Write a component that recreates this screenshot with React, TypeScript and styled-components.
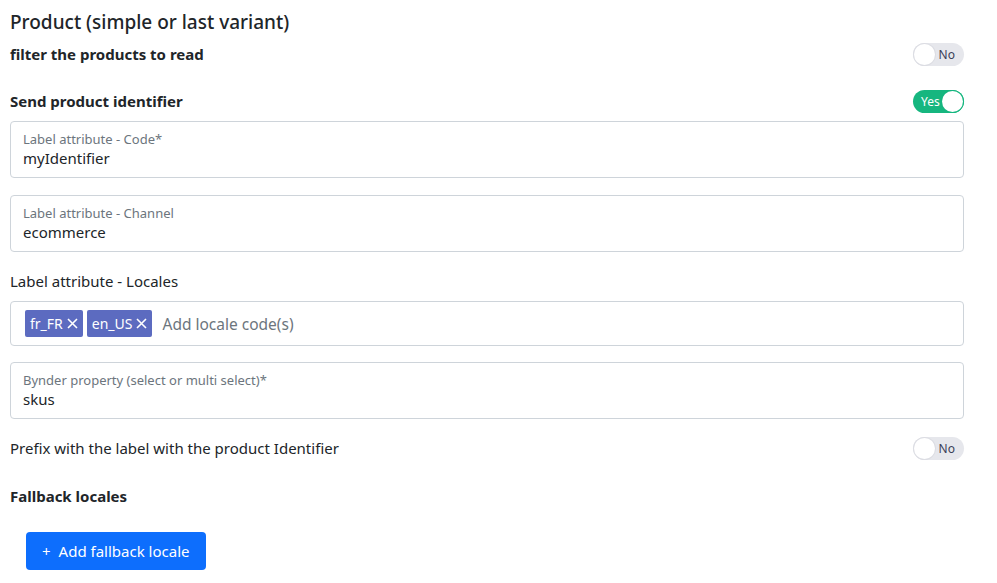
import { createGlobalStyle } from "styled-components";
import styled from "styled-components";

const GlobalStyle = createGlobalStyle`
  body {
    margin: 0;
    background: #ffffff;
    font-family: "Noto Sans", "Open Sans", sans-serif;
    color: #212529;
  }
`;

const Page = styled.div`
  width: 954px;
  padding: 8px 0 0 10px;
`;

const Title = styled.h2`
  margin: 0 0 6px;
  font-size: 19px;
  font-weight: 500;
  line-height: 28px;
`;

const SwitchRow = styled.div<{ $bold?: boolean; $gap?: number }>`
  display: flex;
  align-items: center;
  justify-content: space-between;
  height: 24px;
  margin-bottom: ${(p) => p.$gap ?? 0}px;
  font-size: 15px;
  font-weight: ${(p) => (p.$bold ? 700 : 400)};
`;

const Toggle = styled.div<{ $on?: boolean }>`
  position: relative;
  width: 51px;
  height: 23px;
  border-radius: 12px;
  background: ${(p) => (p.$on ? "#16b67f" : "#e6e7ec")};
  color: ${(p) => (p.$on ? "#ffffff" : "#3b3f58")};
  font-size: 12px;
  font-weight: 400;
  display: flex;
  align-items: center;
  justify-content: ${(p) => (p.$on ? "flex-start" : "flex-end")};
  padding: ${(p) => (p.$on ? "0 0 0 8px" : "0 9px 0 0")};
  box-sizing: border-box;
  &::after {
    content: "";
    position: absolute;
    top: 1px;
    ${(p) => (p.$on ? "right: 1px;" : "left: 1px;")}
    width: 21px;
    height: 21px;
    border-radius: 50%;
    background: #ffffff;
    box-shadow: 0 0 0 1px ${(p) => (p.$on ? "#16b67f" : "#dcdde3")};
  }
`;

const Field = styled.div<{ $gap?: number }>`
  border: 1px solid #ced4da;
  border-radius: 4px;
  height: 57px;
  box-sizing: border-box;
  padding: 8px 12px 0;
  margin-bottom: ${(p) => p.$gap ?? 0}px;
`;

const FieldLabel = styled.div`
  font-size: 13px;
  color: #6c757d;
  line-height: 18px;
`;

const FieldValue = styled.div`
  font-size: 15px;
  line-height: 20px;
  color: #212529;
`;

const PlainLabel = styled.div`
  font-size: 15px;
  line-height: 20px;
  margin-bottom: 10px;
`;

const TagBox = styled.div`
  display: flex;
  align-items: center;
  gap: 4px;
  height: 45px;
  box-sizing: border-box;
  border: 1px solid #ced4da;
  border-radius: 4px;
  padding: 0 14px;
  margin-bottom: 16px;
`;

const Tag = styled.span`
  display: inline-flex;
  align-items: center;
  gap: 4px;
  height: 27px;
  padding: 0 5px 0 5px;
  border-radius: 2px;
  background: #5c6bc0;
  color: #ffffff;
  font-size: 14px;
`;

const Placeholder = styled.span`
  margin-left: 6px;
  font-size: 15.5px;
  color: #6c757d;
`;

const SectionTitle = styled.div`
  font-size: 15px;
  font-weight: 700;
  line-height: 20px;
  margin: 26px 0 26px;
`;

const AddButton = styled.button`
  margin-left: 16px;
  height: 38px;
  padding: 0 16px;
  border: none;
  border-radius: 4px;
  background: #0d6efd;
  color: #ffffff;
  font-family: inherit;
  font-size: 15px;
  display: inline-flex;
  align-items: center;
  gap: 8px;
`;

const Cross = () => (
  <svg width="11" height="11" viewBox="0 0 11 11">
    <path d="M1 1L10 10M10 1L1 10" stroke="#fff" strokeWidth="1.6" />
  </svg>
);

const Switch = ({ on }: { on?: boolean }) => (
  <Toggle $on={on}>{on ? "Yes" : "No"}</Toggle>
);

const App = () => {
  return (
    <Page>
      <GlobalStyle />
      <Title>Product (simple or last variant)</Title>
      <SwitchRow $bold $gap={23}>
        filter the products to read
        <Switch />
      </SwitchRow>
      <SwitchRow $bold $gap={8}>
        Send product identifier
        <Switch on />
      </SwitchRow>
      <Field $gap={17}>
        <FieldLabel>Label attribute - Code*</FieldLabel>
        <FieldValue>myIdentifier</FieldValue>
      </Field>
      <Field $gap={19}>
        <FieldLabel>Label attribute - Channel</FieldLabel>
        <FieldValue>ecommerce</FieldValue>
      </Field>
      <PlainLabel>Label attribute - Locales</PlainLabel>
      <TagBox>
        {["fr_FR", "en_US"].map((code) => (
          <Tag key={code}>
            {code}
            <Cross />
          </Tag>
        ))}
        <Placeholder>Add locale code(s)</Placeholder>
      </TagBox>
      <Field $gap={17}>
        <FieldLabel>Bynder property (select or multi select)*</FieldLabel>
        <FieldValue>skus</FieldValue>
      </Field>
      <SwitchRow>
        Prefix with the label with the product Identifier
        <Switch />
      </SwitchRow>
      <SectionTitle>Fallback locales</SectionTitle>
      <AddButton>
        <span>+</span>
        Add fallback locale
      </AddButton>
    </Page>
  );
};

export default App;
